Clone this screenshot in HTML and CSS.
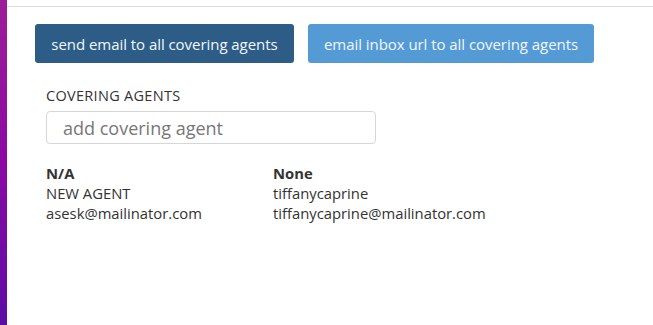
FILE: index.html
```html
<!DOCTYPE html>
<html>
<head>
<meta charset="utf-8">
<link rel="stylesheet" href="styles.css">
</head>
<body>
<div class="layout">
  <div class="sidebar"></div>
  <div class="main">
    <div class="topbar"></div>
    <div class="content">
      <div class="actions">
        <button class="btn btn-dark">send email to all covering agents</button>
        <button class="btn btn-light">email inbox url to all covering agents</button>
      </div>
      <div class="section">
        <div class="label">COVERING AGENTS</div>
        <input class="agent-input" type="text" placeholder="add covering agent">
        <div class="agents">
          <div class="agent">
            <div class="agent-title">N/A</div>
            <div>NEW AGENT</div>
            <div>asesk@mailinator.com</div>
          </div>
          <div class="agent">
            <div class="agent-title">None</div>
            <div>tiffanycaprine</div>
            <div>tiffanycaprine@mailinator.com</div>
          </div>
        </div>
      </div>
    </div>
  </div>
</div>
</body>
</html>
```
FILE: styles.css
```css
html, body {
  margin: 0;
  padding: 0;
  height: 100%;
  background: #fff;
}
body {
  font-family: "Open Sans", "Noto Sans", sans-serif;
  color: #333;
}
.layout {
  display: flex;
  height: 100%;
}
.sidebar {
  width: 7px;
  flex: none;
  background: linear-gradient(to bottom, #9c1f98 0%, #8a0aa3 50%, #5c0ca6 100%);
}
.main {
  flex: 1;
  display: flex;
  flex-direction: column;
}
.topbar {
  height: 6px;
  border-bottom: 1px solid #dcdcdc;
}
.content {
  padding: 17px 0 0 28px;
}
.actions {
  display: flex;
  gap: 14px;
}
.btn {
  height: 39px;
  border: none;
  border-radius: 3px;
  color: #f2f6fa;
  font-family: "Open Sans", "Noto Sans", sans-serif;
  font-size: 15px;
  padding: 0;
  letter-spacing: -0.05px;
}
.btn-dark {
  background: #2d5d87;
  width: 259px;
}
.btn-light {
  background: #549bd6;
  width: 286px;
}
.section {
  padding-left: 11px;
  margin-top: 24px;
}
.label {
  font-size: 14.5px;
  line-height: 18px;
  color: #333;
  letter-spacing: 0.3px;
}
.agent-input {
  display: block;
  box-sizing: border-box;
  margin-top: 6px;
  width: 330px;
  height: 33px;
  border: 1px solid #d6d6d6;
  border-radius: 4px;
  padding: 0 16px;
  font-family: "Open Sans", "Noto Sans", sans-serif;
  font-size: 18px;
  color: #333;
  outline: none;
}
.agent-input::placeholder {
  color: #777;
}
.agents {
  display: flex;
  margin-top: 19px;
}
.agent {
  width: 227px;
  font-size: 14.8px;
  line-height: 20px;
  letter-spacing: 0;
}
.agent-title {
  font-weight: bold;
}
```
